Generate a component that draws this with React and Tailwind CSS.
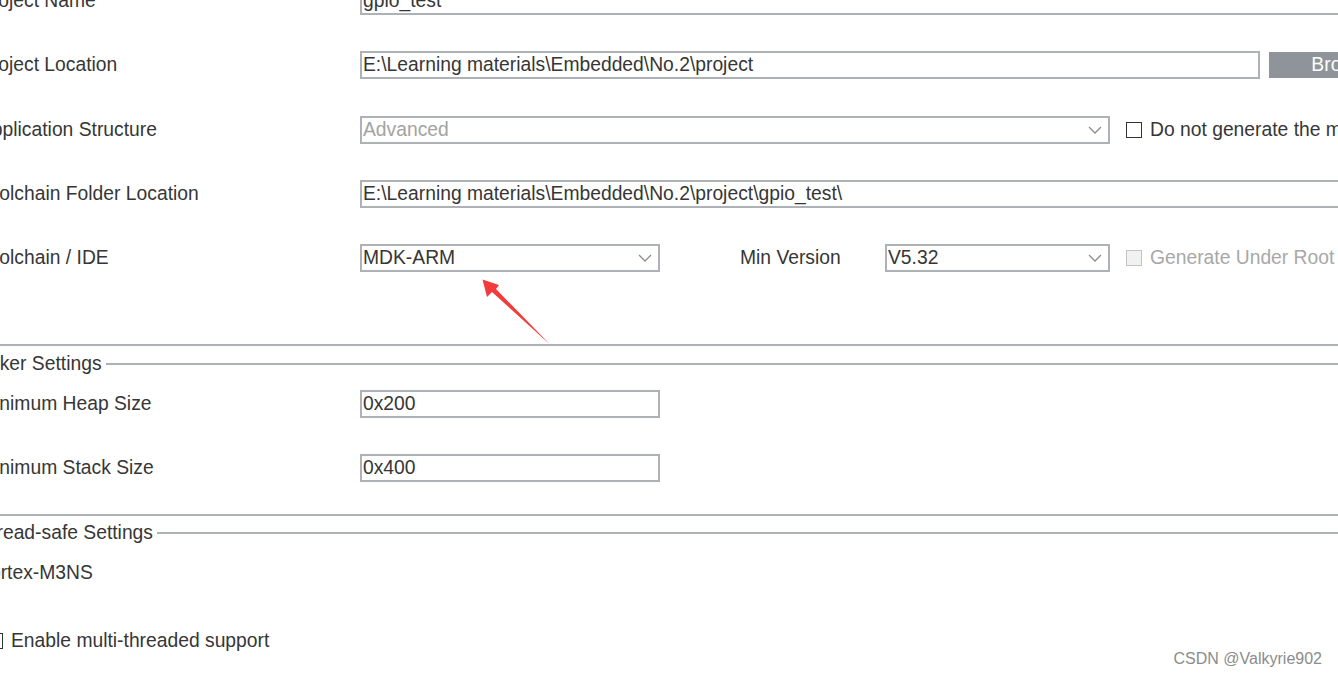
import React from "react";

const font = "font-['Liberation_Sans',Arial,sans-serif]";

function Field({ width, children, disabled }) {
  return (
    <div
      className={`h-[28px] shrink-0 border-2 border-[#aeb2b6] bg-white pl-[1px] flex items-center text-[19.3px] leading-[22px] ${disabled ? "text-[#a3a3a3]" : "text-[#363636]"}`}
      style={{ width }}
    >
      {children}
    </div>
  );
}

function Chevron() {
  return (
    <svg width="14" height="8" viewBox="0 0 14 8" className="shrink-0">
      <path d="M1 1 L7 7 L13 1" fill="none" stroke="#8c8c8c" strokeWidth="1.3" />
    </svg>
  );
}

function Select({ width, value, disabled }) {
  return (
    <Field width={width} disabled={disabled}>
      <span className="flex-1">{value}</span>
      <span className="pr-[6px] flex items-center">
        <Chevron />
      </span>
    </Field>
  );
}

function Check({ disabled }) {
  return (
    <div
      className={`w-[16px] h-[16px] shrink-0 border-[1.5px] ${disabled ? "border-[#c4c4c4] bg-[#f1f1f1]" : "border-[#333] bg-white"}`}
    />
  );
}

function Row({ label, children }) {
  return (
    <div className="flex items-center h-[28px]">
      <div className="w-[381px] shrink-0 text-[19.3px] leading-[22px] text-[#363636]">{label}</div>
      {children}
    </div>
  );
}

function SectionTitle({ title }) {
  return (
    <div className="flex items-center gap-[4px] ml-[-5px] h-[22px]">
      <span className="text-[19.3px] leading-[22px] text-[#363636] whitespace-nowrap">{title}</span>
      <div className="flex-1 h-[2px] bg-[#aeb2b6]" />
    </div>
  );
}

export default function App() {
  return (
    <div className={`relative w-[1338px] h-[677px] overflow-hidden bg-white ${font}`}>
      <div className="ml-[-21px] mt-[-13px] w-[1500px] flex flex-col">
        <div className="flex flex-col gap-[36.25px]">
          <Row label="Project Name">
            <Field width={1100}>gpio_test</Field>
          </Row>
          <Row label="Project Location">
            <Field width={900}>E:\Learning materials\Embedded\No.2\project</Field>
            <button className="ml-[9px] h-[26px] w-[149px] bg-[#8e9499] text-white text-[19.3px] leading-[22px] text-center">
              Browse
            </button>
          </Row>
          <Row label="Application Structure">
            <Select width={750} value="Advanced" disabled />
            <div className="ml-[16px] flex items-center gap-[8px] text-[19.3px] leading-[22px] text-[#363636] whitespace-nowrap">
              <Check />
              <span>Do not generate the main()</span>
            </div>
          </Row>
          <Row label="Toolchain Folder Location">
            <Field width={1100}>E:\Learning materials\Embedded\No.2\project\gpio_test\</Field>
          </Row>
          <Row label="Toolchain / IDE">
            <Select width={300} value="MDK-ARM" />
            <div className="ml-[80px] w-[145px] text-[19.3px] leading-[22px] text-[#363636]">Min Version</div>
            <Select width={225} value="V5.32" />
            <div className="ml-[16px] flex items-center gap-[8px] text-[19.3px] leading-[22px] text-[#a8a8a8] whitespace-nowrap">
              <Check disabled />
              <span>Generate Under Root</span>
            </div>
          </Row>
        </div>

        <div className="mt-[72px] h-[2px] bg-[#aeb2b6]" />
        <div className="mt-[7px]">
          <SectionTitle title="Linker Settings" />
        </div>
        <div className="mt-[15px] flex flex-col gap-[36px]">
          <Row label="Minimum Heap Size">
            <Field width={300}>0x200</Field>
          </Row>
          <Row label="Minimum Stack Size">
            <Field width={300}>0x400</Field>
          </Row>
        </div>

        <div className="mt-[32px] h-[2px] bg-[#aeb2b6]" />
        <div className="mt-[6px]">
          <SectionTitle title="Thread-safe Settings" />
        </div>
        <div className="mt-[18px] text-[19.3px] leading-[22px] text-[#363636] ml-[-3px]">Cortex-M3NS</div>
        <div className="mt-[46px] ml-[8px] flex items-center gap-[8px] text-[19.3px] leading-[22px] text-[#363636]">
          <Check />
          <span>Enable multi-threaded support</span>
        </div>
      </div>

      <svg className="absolute left-0 top-0 pointer-events-none" width="1338" height="677">
        <polygon
          points="482.5,279.5 499,285 496,289 550,344.5 492,292 487,297"
          fill="#f43b3b"
        />
      </svg>

      <div className="absolute right-[16px] bottom-[8px] text-[16px] leading-[20px] text-[#8c8c8c]">
        CSDN @Valkyrie902
      </div>
    </div>
  );
}
